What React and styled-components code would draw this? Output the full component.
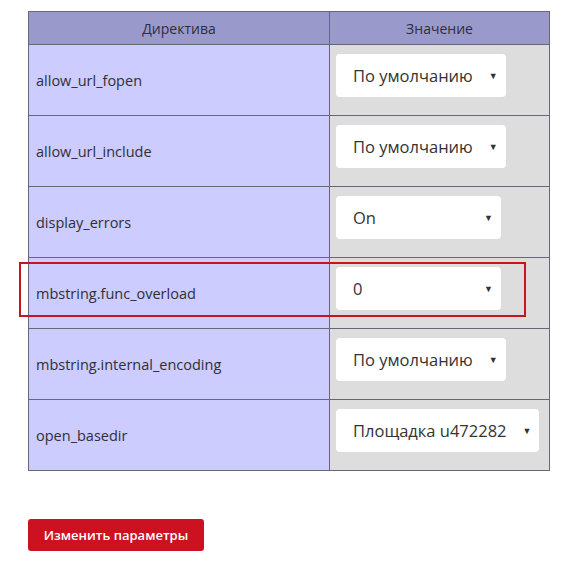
import React from 'react';
import styled, { createGlobalStyle } from 'styled-components';

const GlobalStyle = createGlobalStyle`
  html, body {
    margin: 0;
    background: #ffffff;
  }

  body {
    font-family: 'Open Sans', 'Liberation Sans', sans-serif;
    color: #333;
  }
`;

const StyledPage = styled.div`
  padding: 11px 17px 0 28px;
`;

const StyledTableWrap = styled.div`
  position: relative;
  width: 522px;
`;

const StyledTable = styled.table`
  width: 522px;
  border-collapse: collapse;
  table-layout: fixed;
  border: 1px solid #67677a;

  th,
  td {
    border: 1px solid #67677a;
  }

  th {
    height: 32px;
    padding: 0;
    background-color: #9999cc;
    font-size: 14px;
    font-weight: 400;
    color: #2e2e3c;
    text-align: center;
  }
`;

const StyledRow = styled.tr`
  height: 71px;
`;

const StyledName = styled.td`
  padding: 0 0 0 7px;
  background-color: #ccccff;
  font-size: 14.5px;
  color: #2f2f38;
  vertical-align: middle;
`;

const StyledValue = styled.td`
  padding: 9px 6px 0;
  background-color: #dddddd;
  vertical-align: top;
`;

const StyledSelect = styled.div`
  display: inline-flex;
  align-items: center;
  justify-content: space-between;
  gap: 16px;
  box-sizing: border-box;
  min-width: ${({ wide }) => (wide ? '200px' : '165px')};
  height: 43px;
  padding: 0 8px 0 17px;
  border-radius: 4px;
  background-color: #ffffff;
  font-size: 16.5px;
  color: #333;
  cursor: pointer;

  span.arrow {
    font-size: 9px;
    color: #333;
  }
`;

const StyledHighlight = styled.div`
  position: absolute;
  left: -9px;
  top: 251px;
  width: 503px;
  height: 51px;
  border: 2px solid #c4161c;
  pointer-events: none;
`;

const StyledButton = styled.button`
  display: block;
  margin-top: 48px;
  width: 176px;
  height: 32px;
  padding: 0;
  border: 0;
  border-radius: 3px;
  background-color: #cc1120;
  color: #ffffff;
  font-family: 'Open Sans', 'Liberation Sans', sans-serif;
  font-size: 13px;
  font-weight: 600;
  cursor: pointer;
`;

const directives = [
  { name: 'allow_url_fopen', value: 'По умолчанию' },
  { name: 'allow_url_include', value: 'По умолчанию' },
  { name: 'display_errors', value: 'On' },
  { name: 'mbstring.func_overload', value: '0' },
  { name: 'mbstring.internal_encoding', value: 'По умолчанию' },
  { name: 'open_basedir', value: 'Площадка u472282', wide: true },
];

const App = () => (
  <StyledPage>
    <GlobalStyle />
    <StyledTableWrap>
      <StyledTable>
        <colgroup>
          <col style={{ width: '301px' }} />
          <col />
        </colgroup>
        <thead>
          <tr>
            <th>Директива</th>
            <th>Значение</th>
          </tr>
        </thead>
        <tbody>
          {directives.map(d => (
            <StyledRow key={d.name}>
              <StyledName>{d.name}</StyledName>
              <StyledValue>
                <StyledSelect wide={d.wide}>
                  <span>{d.value}</span>
                  <span className="arrow">▼</span>
                </StyledSelect>
              </StyledValue>
            </StyledRow>
          ))}
        </tbody>
      </StyledTable>
      <StyledHighlight />
    </StyledTableWrap>

    <StyledButton>Изменить параметры</StyledButton>
  </StyledPage>
);

export default App;
